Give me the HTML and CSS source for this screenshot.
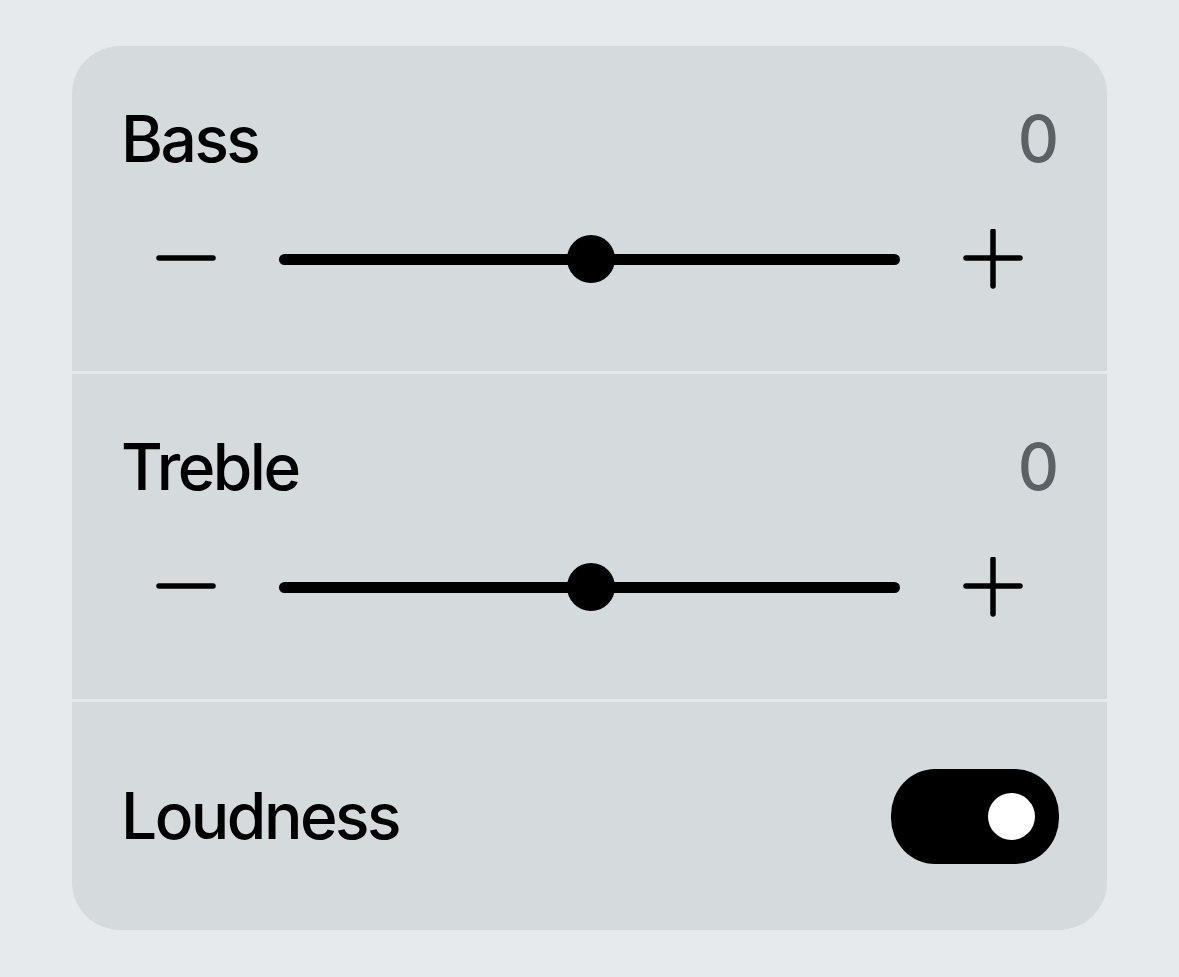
FILE: index.html
```html
<!DOCTYPE html>
<html lang="en">
<head>
<meta charset="utf-8">
<title>Sound</title>
<link rel="stylesheet" href="styles.css">
</head>
<body>
<div class="card">
  <section class="section section-slider">
    <div class="title-row">
      <span class="label">Bass</span>
      <span class="value">0</span>
    </div>
    <div class="slider-row">
      <svg class="icon" viewBox="0 0 60 60" width="60" height="60" aria-hidden="true">
        <line x1="3" y1="29" x2="57" y2="29" stroke="#000" stroke-width="5.5" stroke-linecap="round"/>
      </svg>
      <div class="track">
        <div class="thumb" style="left: 50.2%"></div>
      </div>
      <svg class="icon" viewBox="0 0 60 60" width="60" height="60" aria-hidden="true">
        <line x1="3" y1="29" x2="57" y2="29" stroke="#000" stroke-width="5.5" stroke-linecap="round"/>
        <line x1="30" y1="2" x2="30" y2="57" stroke="#000" stroke-width="5.5" stroke-linecap="round"/>
      </svg>
    </div>
  </section>
  <section class="section section-slider">
    <div class="title-row">
      <span class="label">Treble</span>
      <span class="value">0</span>
    </div>
    <div class="slider-row">
      <svg class="icon" viewBox="0 0 60 60" width="60" height="60" aria-hidden="true">
        <line x1="3" y1="29" x2="57" y2="29" stroke="#000" stroke-width="5.5" stroke-linecap="round"/>
      </svg>
      <div class="track">
        <div class="thumb" style="left: 50.2%"></div>
      </div>
      <svg class="icon" viewBox="0 0 60 60" width="60" height="60" aria-hidden="true">
        <line x1="3" y1="29" x2="57" y2="29" stroke="#000" stroke-width="5.5" stroke-linecap="round"/>
        <line x1="30" y1="2" x2="30" y2="57" stroke="#000" stroke-width="5.5" stroke-linecap="round"/>
      </svg>
    </div>
  </section>
  <section class="section section-toggle">
    <span class="label">Loudness</span>
    <div class="toggle"><div class="toggle-knob"></div></div>
  </section>
</div>
</body>
</html>
```

FILE: styles.css
```css
* { box-sizing: border-box; }

html, body {
  margin: 0;
  padding: 0;
  background: #e6eaed;
}

body {
  font-family: Inter, "Noto Sans", "Liberation Sans", sans-serif;
  color: #000;
  padding: 46px 72px 0 72px;
}

.card {
  width: 1035px;
  height: 884px;
  border-radius: 48px;
  overflow: hidden;
  display: flex;
  flex-direction: column;
  gap: 3px;
}

.section {
  background: #d5dadd;
  padding: 0 48px 0 49px;
}

.section-slider {
  height: 325px;
  padding-top: 61px;
  display: flex;
  flex-direction: column;
}

.title-row {
  display: flex;
  justify-content: space-between;
  align-items: baseline;
  height: 64px;
}

.label {
  font-size: 64px;
  line-height: 64px;
  font-weight: 500;
  letter-spacing: -2.5px;
}

.value {
  font-size: 64px;
  line-height: 64px;
  font-weight: 500;
  color: #5c6166;
}

.slider-row {
  margin: 58px 36px 0 35px;
  height: 60px;
  display: flex;
  align-items: center;
  gap: 63px;
}

.icon {
  display: block;
  flex: 0 0 60px;
}

.track {
  position: relative;
  flex: 1;
  height: 11px;
  border-radius: 6px;
  background: #000;
}

.thumb {
  position: absolute;
  top: 50%;
  width: 48px;
  height: 48px;
  border-radius: 50%;
  background: #000;
  transform: translate(-50%, -50%);
}

.section-toggle {
  flex: 1;
  display: flex;
  align-items: center;
  justify-content: space-between;
}

.toggle {
  width: 168px;
  height: 95px;
  border-radius: 44px / 46px;
  background: #000;
  display: flex;
  align-items: center;
  justify-content: flex-end;
  padding-right: 24px;
}

.toggle-knob {
  width: 47px;
  height: 47px;
  border-radius: 50%;
  background: #fff;
}
```
